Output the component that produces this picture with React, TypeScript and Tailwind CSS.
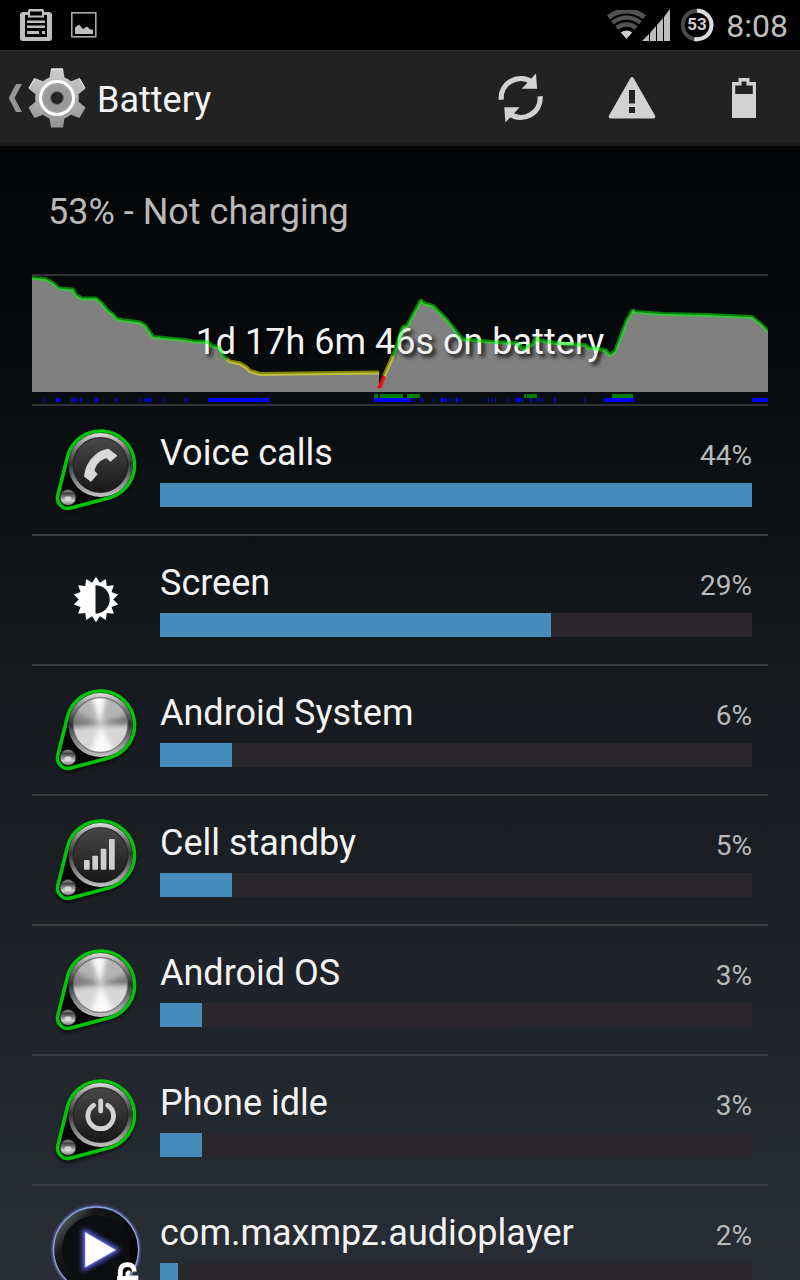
import { useId, type ReactNode } from "react";

function ClipboardIcon() {
  return (
    <svg viewBox="0 0 32 32" className="size-8" aria-hidden="true">
      <path
        fill="#bdbdbd"
        fillRule="evenodd"
        d="M3 3H8V1.500Q8 0 9.500 0H22.500Q24 0 24 1.500V3H29Q32 3 32 6V29Q32 32 29 32H3Q0 32 0 29V6Q0 3 3 3ZM8 6H5V28H27V6H24V8.500H8ZM10 2.500V6.500H22V2.500Z"
      />
      <path fill="#bdbdbd" d="M7 11.500H25V14H7ZM7 16.500H25V19H7ZM7 22H19V25H7ZM22 22H25V25H22Z" />
    </svg>
  );
}

function PictureIcon() {
  return (
    <svg viewBox="0 0 26 26" className="size-[26px]" aria-hidden="true">
      <rect x="0.8" y="0.8" width="24" height="24" fill="none" stroke="#a8a8a8" strokeWidth="1.6" />
      <path fill="#bdbdbd" d="M4 22V15.500L8 12.500L12 17L16 14.500L18.500 17L22 18V22Z" />
    </svg>
  );
}

function WifiIcon() {
  return (
    <svg viewBox="0 0 39 30" className="h-[30px] w-[39px]" aria-label="Wi-Fi" role="img">
      <g fill="none" stroke="#525252">
        <path d="M1.500 7.200A29 29 0 0 1 37.500 7.200" strokeWidth="5" />
        <path d="M5.500 12.800A21.500 21.500 0 0 1 33.500 12.800" strokeWidth="4.400" />
        <path d="M9.800 18A15 15 0 0 1 29.200 18" strokeWidth="4.400" />
      </g>
      <path fill="#cfcfcf" d="M13.800 22.600Q19.500 18.600 25.200 22.600L19.500 29Z" />
    </svg>
  );
}

function SignalIcon() {
  return (
    <svg viewBox="0 0 28 32" className="h-8 w-7" aria-label="Signal" role="img">
      <path
        fill="#bdbdbd"
        d="M0 32L7 25V32ZM8 24L14 17V32H8ZM15 16L21 9V32H15ZM22 8L28 0V32H22Z"
      />
    </svg>
  );
}

function BatteryRing() {
  return (
    <svg viewBox="0 0 34 34" className="size-[34px]" aria-label="Battery 53%" role="img">
      <circle cx="17" cy="17" r="14.300" fill="none" stroke="#4a4a4a" strokeWidth="4" />
      <path d="M17 2.700A14.300 14.300 0 1 1 14.300 31" fill="none" stroke="#dcdcdc" strokeWidth="4" />
      <text
        x="17"
        y="22"
        textAnchor="middle"
        fill="#cfcfcf"
        className="font-[Roboto,sans-serif] text-[17px] font-bold"
      >
        53
      </text>
    </svg>
  );
}

function GearIcon() {
  return (
    <svg viewBox="-30 -30 60 60" className="size-[60px]" aria-hidden="true">
      <defs>
        <linearGradient id="gear" x1="0" y1="-30" x2="0" y2="30" gradientUnits="userSpaceOnUse">
          <stop offset="0" stopColor="#cfcfcf" />
          <stop offset="1" stopColor="#929292" />
        </linearGradient>
      </defs>
      <path
        fill="url(#gear)"
        d="M-6 -29.500H6L7.500 -20.400A22 22 0 0 1 13.900 -16.700L22.500 -19.950L28.500 -9.550L21.500 -3.700A22 22 0 0 1 21.500 3.700L28.500 9.550L22.500 19.950L13.900 16.700A22 22 0 0 1 7.500 20.400L6 29.500H-6L-7.500 20.400A22 22 0 0 1 -13.900 16.700L-22.500 19.950L-28.500 9.550L-21.500 3.700A22 22 0 0 1 -21.500 -3.700L-28.500 -9.550L-22.500 -19.950L-13.900 -16.700A22 22 0 0 1 -7.500 -20.400Z"
      />
      <path
        d="M-6 -29H6M22.500 -19.500L28 -10M-22.500 -19.500L-28 -10"
        stroke="#efefef"
        strokeWidth="1"
        fill="none"
      />
      <circle r="16.500" fill="#a2a2a2" stroke="#fff" strokeWidth="3" />
      <circle r="13" fill="#9a9a9a" />
      <circle r="6.500" fill="#242424" stroke="#6f6f6f" strokeWidth="1" />
    </svg>
  );
}

function RefreshIcon() {
  return (
    <svg viewBox="-26 -26 52 52" className="size-[52px]" aria-hidden="true">
      <path
        d="M-19.400 1.700A19.400 19.400 0 0 1 11 -16M19.400 -1.700A19.400 19.400 0 0 1 -11 16"
        transform="translate(0.700 0)"
        fill="none"
        stroke="#d2d2d2"
        strokeWidth="5.200"
      />
      <path
        transform="translate(0.700 0)"
        fill="#d2d2d2"
        d="M15.300 -24.400L16.400 -9.300H1ZM-15.300 24.400L-16.400 9.300H-1Z"
      />
    </svg>
  );
}

function WarningIcon() {
  return (
    <svg viewBox="-26 -26 52 52" className="size-[52px]" aria-hidden="true">
      <path
        fill="#d2d2d2"
        fillRule="evenodd"
        d="M-1.800 -19.600Q0 -22.400 1.800 -19.600L23 17.500Q23.800 20.500 21 20.500H-21Q-23.800 20.500 -23 17.500ZM-3 -8V5.500H3V-8ZM-3 9V15H3V9Z"
      />
    </svg>
  );
}

function BatteryIcon() {
  return (
    <svg viewBox="-26 -26 52 52" className="size-[52px]" aria-hidden="true">
      <path
        fill="#d2d2d2"
        fillRule="evenodd"
        d="M-5.500 -20H5.500V-16H12V20H-12V-16H-5.500ZM-2.500 -16.500V-12.500H-8.800V-4H8.800V-12.500H2.500V-16.500Z"
      />
    </svg>
  );
}

function KnobIcon({ brushed = false, children }: { brushed?: boolean; children?: ReactNode }) {
  const id = useId();
  const ring = `${id}ring`;
  const face = `${id}face`;
  const ball = `${id}ball`;
  const clip = `${id}clip`;
  const blur = `${id}blur`;
  const glow = `${id}glow`;
  return (
    <svg viewBox="0 0 96 96" className="size-24 shrink-0" aria-hidden="true">
      <defs>
        <linearGradient id={ring} x1="0" y1="0" x2="0" y2="1">
          <stop offset="0" stopColor="#dedede" />
          <stop offset="0.250" stopColor="#777" />
          <stop offset="0.480" stopColor="#333" />
          <stop offset="0.700" stopColor="#777" />
          <stop offset="1" stopColor="#c4c4c4" />
        </linearGradient>
        <linearGradient id={face} x1="0" y1="0" x2="0" y2="1">
          <stop offset="0" stopColor="#484848" />
          <stop offset="1" stopColor="#171717" />
        </linearGradient>
        <linearGradient id={ball} x1="0" y1="0" x2="0" y2="1">
          <stop offset="0" stopColor="#999" />
          <stop offset="0.250" stopColor="#444" />
          <stop offset="0.550" stopColor="#999" />
          <stop offset="0.700" stopColor="#ccc" />
          <stop offset="1" stopColor="#777" />
        </linearGradient>
        <clipPath id={clip}>
          <circle cx="52.500" cy="43" r="27.500" />
        </clipPath>
        <filter id={blur}>
          <feGaussianBlur stdDeviation="2.600" />
        </filter>
        <filter id={glow}>
          <feGaussianBlur stdDeviation="1.500" />
        </filter>
      </defs>
      <path
        d="M9.800 76L19.500 36.800A34 34 0 1 1 61.700 77.700L22.800 88.600A10.500 10.500 0 0 1 9.800 76Z"
        stroke="#000"
        strokeWidth="4"
        opacity="0.550"
        filter={`url(#${glow})`}
      />
      <path
        d="M9.800 73.500L19.500 34.800A34 34 0 1 1 61.700 75.700L22.800 86.100A10.500 10.500 0 0 1 9.800 73.500Z"
        fill="#080a08"
        stroke="#04c40a"
        strokeWidth="3.600"
      />
      <circle cx="52.500" cy="43" r="32" fill={`url(#${ring})`} />
      <circle cx="52.500" cy="43" r="27.500" fill={brushed ? "#b4b4b4" : `url(#${face})`} />
      {brushed && (
        <g clipPath={`url(#${clip})`}>
          <g filter={`url(#${blur})`}>
            <path d="M52.500 43L12 20L12 46ZM52.500 43L92 26V42Z" fill="#8a8a8a" />
            <path d="M52.500 43L12 37V46ZM52.500 43L92 33V42Z" fill="#6d6d6d" />
            <path d="M52.500 43L40 6H60ZM52.500 43L36 84H74Z" fill="#fafafa" />
            <path d="M52.500 43L12 48V72L36 84ZM52.500 43L92 46V66L74 84Z" fill="#d6d6d6" />
          </g>
        </g>
      )}
      <circle
        cx="52.500"
        cy="43"
        r="27.300"
        fill="none"
        stroke={brushed ? "#555" : "#1c1c1c"}
        strokeWidth="1.200"
        opacity="0.700"
      />
      <circle cx="20" cy="75.500" r="8" fill={`url(#${ball})`} stroke="#222" strokeWidth="0.800" />
      <ellipse cx="20" cy="76.500" rx="3.500" ry="2.300" fill="#f1f1f1" opacity="0.700" />
      {children}
    </svg>
  );
}

function PhoneKnob() {
  return (
    <KnobIcon>
      <path
        fill="#d9d9d9"
        stroke="#d9d9d9"
        strokeWidth="0.800"
        strokeLinejoin="round"
        d="M36.800 52C38 43.500 43 36 50 31C54 28.400 58 27.300 60.500 27.300L69 33.800L62.200 39.500L58.500 35.800C52 37.500 47 43 46.300 49L49.300 52L43 59.500L36.500 54.500Z"
      />
    </KnobIcon>
  );
}

function SignalKnob() {
  return (
    <KnobIcon>
      <g fill="#cfcfcf">
        <rect x="36" y="48" width="5.700" height="9.700" rx="0.800" />
        <rect x="44.300" y="43.700" width="5.700" height="14" rx="0.800" />
        <rect x="52.700" y="36.700" width="5.700" height="21" rx="0.800" />
        <rect x="61" y="27" width="5.700" height="30.700" rx="0.800" />
      </g>
    </KnobIcon>
  );
}

function PowerKnob() {
  return (
    <KnobIcon>
      <g fill="none" stroke="#d2d2d2" strokeLinecap="round">
        <path d="M45.700 33.200A12.800 12.800 0 1 0 59.700 33.200" strokeWidth="4.800" />
        <path d="M52.700 28.800V39" strokeWidth="4.800" />
      </g>
    </KnobIcon>
  );
}

const sunPoints = Array.from({ length: 28 }, (_, i) => {
  const r = i % 2 === 0 ? 22.8 : 17.2;
  const a = (i * Math.PI) / 14 - Math.PI / 2;
  return `${(48 + r * Math.cos(a)).toFixed(2)},${(47.5 + r * Math.sin(a)).toFixed(2)}`;
}).join(" ");

function BrightnessIcon() {
  return (
    <svg viewBox="0 0 96 96" className="size-24 shrink-0" aria-hidden="true">
      <polygon points={sunPoints} fill="#fff" />
      <path d="M47.500 33.200A14.200 14.200 0 0 1 47.500 61.600Z" fill="#14181b" />
    </svg>
  );
}

function PlayerIcon() {
  return (
    <svg viewBox="0 0 96 96" className="size-24 shrink-0" aria-hidden="true">
      <defs>
        <linearGradient id="disc" x1="0.100" y1="0.100" x2="0.800" y2="0.700">
          <stop offset="0" stopColor="#606468" />
          <stop offset="0.280" stopColor="#15181b" />
          <stop offset="1" stopColor="#030405" />
        </linearGradient>
        <filter id="halo" x="-50%" y="-50%" width="200%" height="200%">
          <feGaussianBlur stdDeviation="2.600" />
        </filter>
        <filter id="rim">
          <feGaussianBlur stdDeviation="1" />
        </filter>
      </defs>
      <circle cx="48" cy="47.500" r="43" fill="none" stroke="#6c7fd0" strokeWidth="2" filter="url(#rim)" />
      <circle cx="48" cy="47.500" r="42.500" fill="url(#disc)" stroke="#8ea3dc" strokeWidth="1.300" />
      <circle cx="48" cy="47.500" r="34" fill="#0b0d0f" />
      <path d="M37 30L68 48L37 65.500Z" fill="#5a62e8" stroke="#5a62e8" strokeWidth="5" filter="url(#halo)" />
      <path d="M37 30L68 48L37 65.500Z" fill="#fff" stroke="#8d93ff" strokeWidth="0.600" />
      <path
        d="M72.300 76V69Q73 62.700 79.500 62.700Q86 62.700 86.300 69.500"
        fill="none"
        stroke="#fff"
        strokeWidth="4.800"
      />
      <path d="M69 74H77.500V71L79.500 68.500H82.500V70.500L81 73.500H90.300V92H69Z" fill="#fff" />
    </svg>
  );
}

const level = {
  fill: "M0 116V2L13 3L21 7L27 12.500L41 13.500L44 19L50 22.500L64 22.500L70 27.500L76 35L81 38.500L85 43L90 44L108 46.500L113 49.500L121 61L153 64L161 65.500L176 66L180 70L187 71.500L191 80L195 83L198 85.500L208 87.500L214 91L218 95L228 98L345 96.500H347V111L352 100L361 79.500L365 69L371 51L375 50L389 24L391 27L401 30L415 44L430 63L460 66L485 67L491 73L501 68L504 61L506 64L523 67L553 69L556 71.500L573 74L578 79L583 75.500L590 57L595 44L601 34L603 36L631 38L675 39L720 41L730 49L736 55.500V116Z",
  high: "M0 2L13 3L21 7L27 12.500L41 13.500L44 19L50 22.500L64 22.500L70 27.500L76 35L81 38.500L85 43L90 44L108 46.500L113 49.500L121 61L153 64L161 65.500L176 66L180 70L187 71.500L191 80L195 83M361 79.500L365 69L371 51L375 50L389 24L391 27L401 30L415 44L430 63L460 66L485 67L491 73L501 68L504 61L506 64L523 67L553 69L556 71.500L573 74L578 79L583 75.500L590 57L595 44L601 34L603 36L631 38L675 39L720 41L730 49L736 55.500",
  mid: "M195 83L198 85.500L208 87.500L214 91L218 95L228 98L345 96.500H347M352 100L361 79.500",
  low: "M346 110L348 111L352 100",
};

const screenOn: [number, number][] = [
  [11, 1], [24, 4], [39, 2], [42, 1], [45, 1], [48, 2], [63, 3], [83, 2], [108, 1], [113, 2],
  [116, 2], [119, 1], [132, 1], [152, 1], [155, 1], [176, 61], [342, 37], [382, 1], [389, 2],
  [401, 1], [408, 3], [413, 2], [417, 1], [421, 1], [424, 2], [429, 1], [456, 1], [459, 1],
  [463, 1], [475, 1], [484, 4], [489, 2], [498, 2], [505, 1], [507, 1], [510, 1], [522, 2],
  [552, 1], [572, 30], [720, 16],
];

const charging: [number, number][] = [
  [342, 4], [348, 23], [375, 13], [492, 2], [495, 10], [580, 21],
];

function HistoryChart() {
  return (
    <div className="grid h-32 items-center">
      <svg
        viewBox="0 0 736 128"
        preserveAspectRatio="none"
        className="col-start-1 row-start-1 h-32 w-full"
        aria-hidden="true"
      >
        <path d={level.fill} fill="#808080" />
        <g shapeRendering="crispEdges">
          {charging.map(([x, w]) => (
            <rect key={x} x={x} y="118" width={w} height="4" fill="#008000" />
          ))}
          {screenOn.map(([x, w]) => (
            <rect key={x} x={x} y="122" width={w} height="4" fill="#0000ff" />
          ))}
        </g>
      </svg>
      <p className="col-start-1 row-start-1 pt-1 text-center text-4xl text-[#f3f3f3] [text-shadow:3px_3px_4px_#000]">
        1d 17h 6m 46s on battery
      </p>
      <svg
        viewBox="0 0 736 128"
        preserveAspectRatio="none"
        className="col-start-1 row-start-1 h-32 w-full"
        aria-hidden="true"
      >
        <g fill="none" strokeWidth="4" strokeLinejoin="bevel">
          <path d={level.high} stroke="#00ff00" strokeOpacity="0.500" />
          <path d={level.mid} stroke="#ffff00" strokeOpacity="0.500" />
          <path d={level.low} stroke="#ff0000" strokeOpacity="0.800" />
        </g>
      </svg>
    </div>
  );
}

const usage = [
  { name: "Voice calls", percent: 44, fill: 100, icon: <PhoneKnob /> },
  { name: "Screen", percent: 29, fill: 66, icon: <BrightnessIcon /> },
  { name: "Android System", percent: 6, fill: 12.2, icon: <KnobIcon brushed /> },
  { name: "Cell standby", percent: 5, fill: 12.2, icon: <SignalKnob /> },
  { name: "Android OS", percent: 3, fill: 7.1, icon: <KnobIcon brushed /> },
  { name: "Phone idle", percent: 3, fill: 7.1, icon: <PowerKnob /> },
  { name: "com.maxmpz.audioplayer", percent: 2, fill: 3, icon: <PlayerIcon /> },
];

const actions = [
  { label: "Refresh", icon: <RefreshIcon /> },
  { label: "Warnings", icon: <WarningIcon /> },
  { label: "Battery status style", icon: <BatteryIcon /> },
];

export default function App() {
  return (
    <div className="flex h-screen flex-col overflow-hidden bg-black font-[Roboto,sans-serif] text-[#f3f3f3]">
      <div className="flex h-[50px] shrink-0 items-center justify-between bg-black pr-3 pl-5">
        <div className="flex items-center gap-[19px]">
          <ClipboardIcon />
          <PictureIcon />
        </div>
        <div className="flex items-center">
          <WifiIcon />
          <div className="-ml-1">
            <SignalIcon />
          </div>
          <div className="ml-[10px]">
            <BatteryRing />
          </div>
          <time className="ml-3 pt-0.5 text-[32px] leading-[48px] text-[#bebebe]">8:08</time>
        </div>
      </div>

      <header className="flex h-24 shrink-0 items-center justify-between border-t border-b-[3px] border-t-[#303030] border-b-[#1a1a1a] bg-[#222] pt-0.5">
        <button type="button" aria-label="Navigate up" className="flex h-full items-center pl-2">
          <svg viewBox="0 0 15 28" className="h-7 w-[15px]" aria-hidden="true">
            <path fill="#959595" d="M0.700 14L8 0H14L6.500 14L14 28H8Z" />
          </svg>
          <span className="ml-1">
            <GearIcon />
          </span>
          <h1 className="ml-[10px] pt-1 text-4xl">Battery</h1>
        </button>
        <div className="flex h-full">
          {actions.map((action) => (
            <button
              key={action.label}
              type="button"
              aria-label={action.label}
              className="flex h-full w-28 items-center justify-center"
            >
              {action.icon}
            </button>
          ))}
        </div>
      </header>

      <main className="min-h-0 flex-1 overflow-hidden bg-linear-to-b from-[#030405] via-[#171b1f] to-[#292d35] px-8">
        <p className="flex h-32 items-center px-4 pt-1 text-4xl text-[#b9b9b9]">
          53% - Not charging
        </p>
        <div className="border-y-2 border-[#303234]">
          <HistoryChart />
        </div>
        <ul>
          {usage.map((item) => (
            <li
              key={item.name}
              className="flex h-[130px] items-center border-b-2 border-[#3a3d40] px-4"
            >
              {item.icon}
              <div className="ml-4 min-w-0 flex-1 pb-0.5">
                <div className="flex items-baseline justify-between">
                  <span className="truncate text-4xl leading-[42px]">{item.name}</span>
                  <span className="text-[28px] leading-[42px] text-[#b9b9b9]">{item.percent}%</span>
                </div>
                <div
                  role="progressbar"
                  aria-label={item.name}
                  aria-valuenow={item.percent}
                  className="mt-1.5 h-6 bg-[#29262c]"
                >
                  <div className="h-full bg-[#468cba]" style={{ width: `${item.fill}%` }} />
                </div>
              </div>
            </li>
          ))}
        </ul>
      </main>
    </div>
  );
}
